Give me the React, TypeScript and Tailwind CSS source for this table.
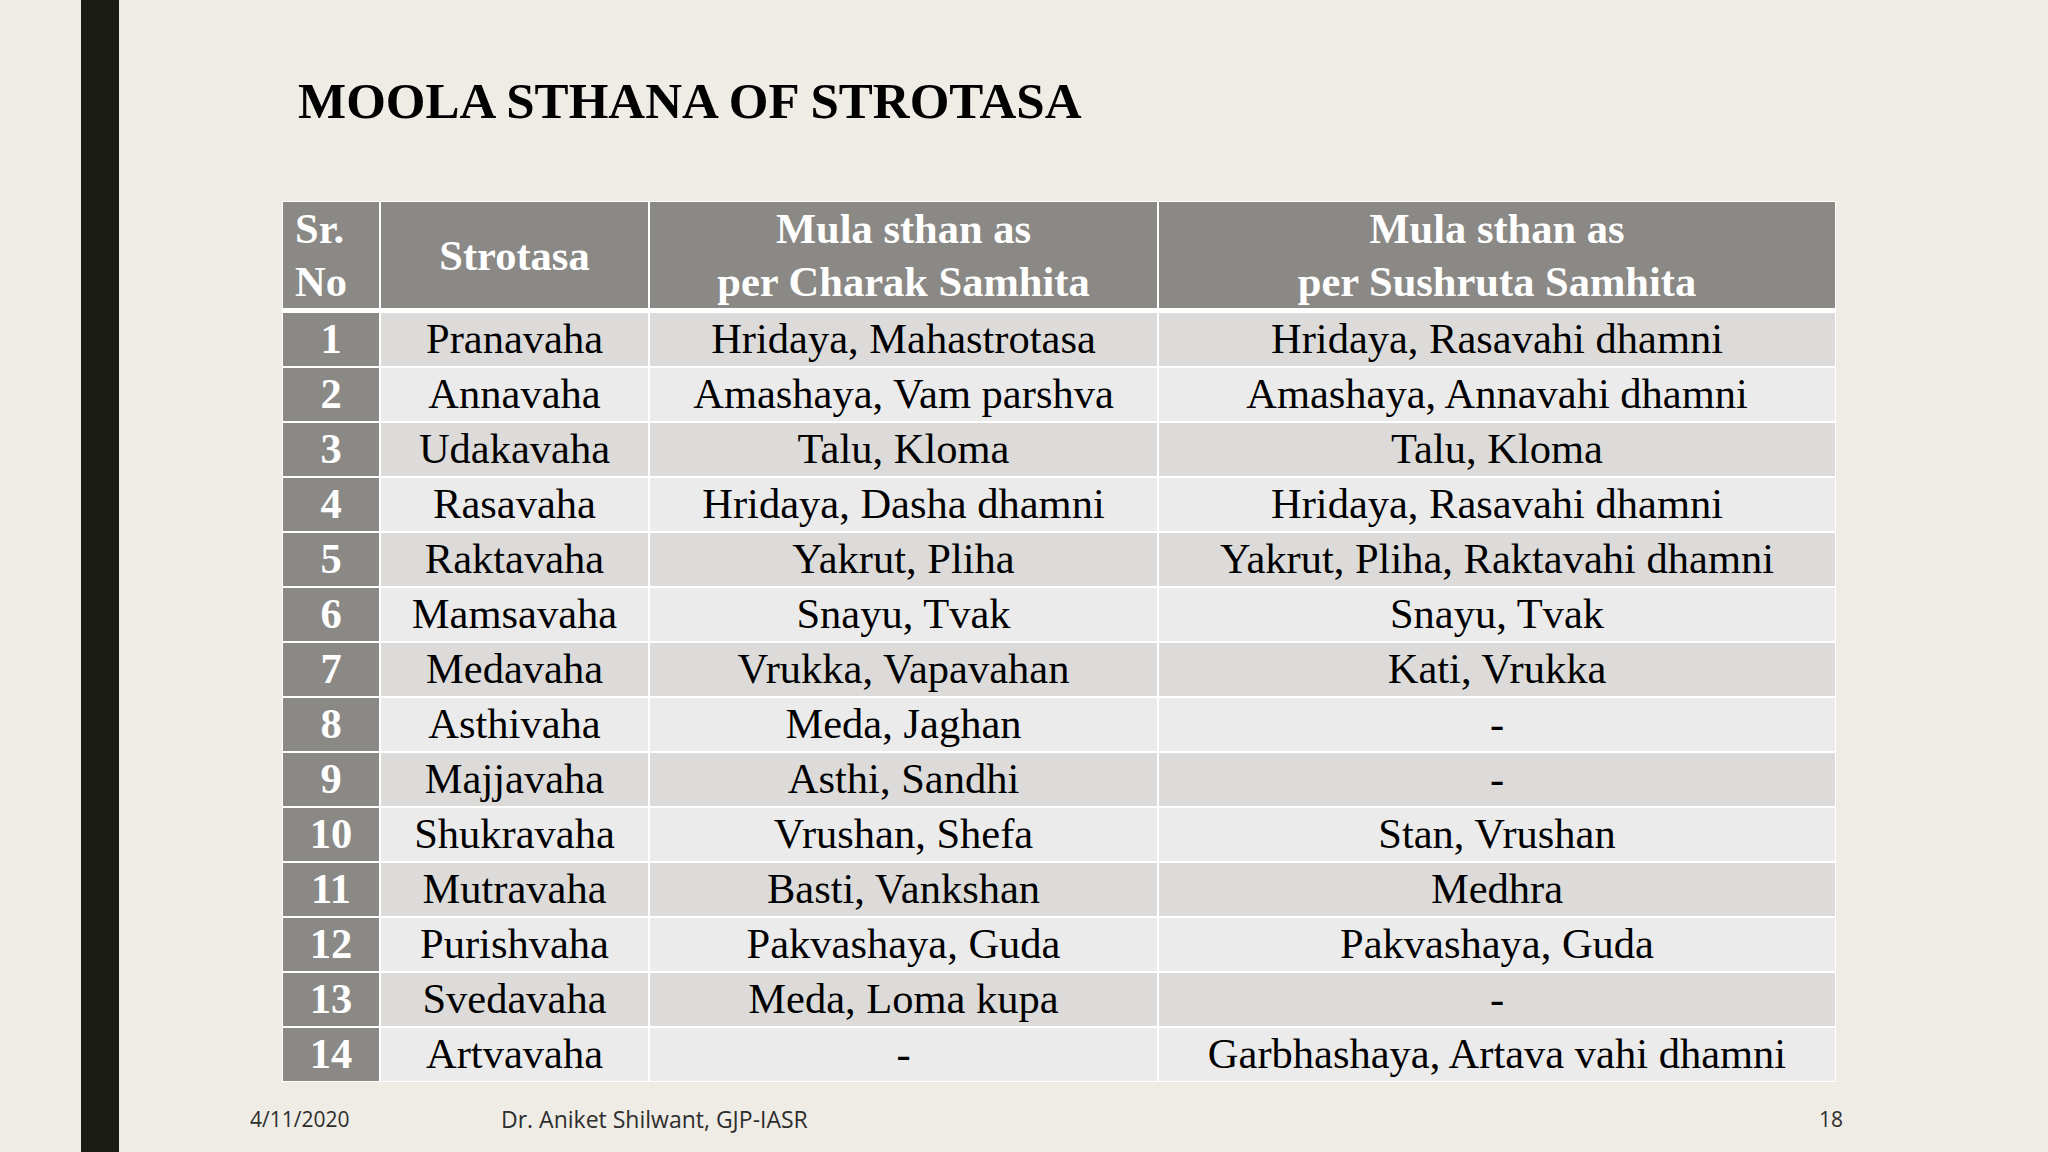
const rows: [string, string, string, string][] = [
  ['1', 'Pranavaha', 'Hridaya, Mahastrotasa', 'Hridaya, Rasavahi dhamni'],
  ['2', 'Annavaha', 'Amashaya, Vam parshva', 'Amashaya, Annavahi dhamni'],
  ['3', 'Udakavaha', 'Talu, Kloma', 'Talu, Kloma'],
  ['4', 'Rasavaha', 'Hridaya, Dasha dhamni', 'Hridaya, Rasavahi dhamni'],
  ['5', 'Raktavaha', 'Yakrut, Pliha', 'Yakrut, Pliha, Raktavahi dhamni'],
  ['6', 'Mamsavaha', 'Snayu, Tvak', 'Snayu, Tvak'],
  ['7', 'Medavaha', 'Vrukka, Vapavahan', 'Kati, Vrukka'],
  ['8', 'Asthivaha', 'Meda, Jaghan', '-'],
  ['9', 'Majjavaha', 'Asthi, Sandhi', '-'],
  ['10', 'Shukravaha', 'Vrushan, Shefa', 'Stan, Vrushan'],
  ['11', 'Mutravaha', 'Basti, Vankshan', 'Medhra'],
  ['12', 'Purishvaha', 'Pakvashaya, Guda', 'Pakvashaya, Guda'],
  ['13', 'Svedavaha', 'Meda, Loma kupa', '-'],
  ['14', 'Artvavaha', '-', 'Garbhashaya, Artava vahi dhamni'],
];

const cols = 'grid grid-cols-[96px_267px_507px_676px] gap-x-[2px]';

export default function App() {
  return (
    <div className="w-[2048px] h-[1152px] bg-[#efece6] flex overflow-hidden pl-[81px] font-['Liberation_Serif',serif]">
      {/* left accent bar */}
      <div className="w-[38px] h-full bg-[#1b1c15] shrink-0" />

      <div className="flex flex-col pt-[76px]">
        <h1 className="ml-[179px] text-[51px] leading-none font-bold text-black">
          MOOLA STHANA OF STROTASA
        </h1>

        {/* table */}
        <div className="ml-[163px] mt-[74px] w-[1554px] bg-white p-[1px] flex flex-col gap-[5px]">
          <div className={`${cols} h-[106px] text-white font-bold text-[42.5px] leading-[53px]`}>
            <div className="bg-[#8a8985] pl-[12px]">
              <div>Sr.</div>
              <div>No</div>
            </div>
            <div className="bg-[#8a8985] flex items-center justify-center">Strotasa</div>
            <div className="bg-[#8a8985] text-center">
              <div>Mula sthan as</div>
              <div>per Charak Samhita</div>
            </div>
            <div className="bg-[#8a8985] text-center">
              <div>Mula sthan as</div>
              <div>per Sushruta Samhita</div>
            </div>
          </div>

          <div className="flex flex-col gap-y-[2px]">
            {rows.map((r, i) => {
              const bg = i % 2 === 0 ? 'bg-[#dcdbd9]' : 'bg-[#ecebec]';
              return (
                <div key={r[0]} className={`${cols} h-[53px] text-[42.5px] leading-none`}>
                  <div className="bg-[#8a8985] text-white font-bold flex items-center justify-center">
                    {r[0]}
                  </div>
                  <div className={`${bg} text-black flex items-center justify-center`}>{r[1]}</div>
                  <div className={`${bg} text-black flex items-center justify-center`}>{r[2]}</div>
                  <div className={`${bg} text-black flex items-center justify-center`}>{r[3]}</div>
                </div>
              );
            })}
          </div>
        </div>

        {/* footer */}
        <div className="ml-[131px] mt-[20px] w-[1593px] flex items-center text-[#2e2e2e] font-['Open_Sans',sans-serif]">
          <div className="w-[251px] text-[21px]">4/11/2020</div>
          <div className="flex-1 text-[23px]">Dr. Aniket Shilwant, GJP-IASR</div>
          <div className="text-[21px]">18</div>
        </div>
      </div>
    </div>
  );
}
